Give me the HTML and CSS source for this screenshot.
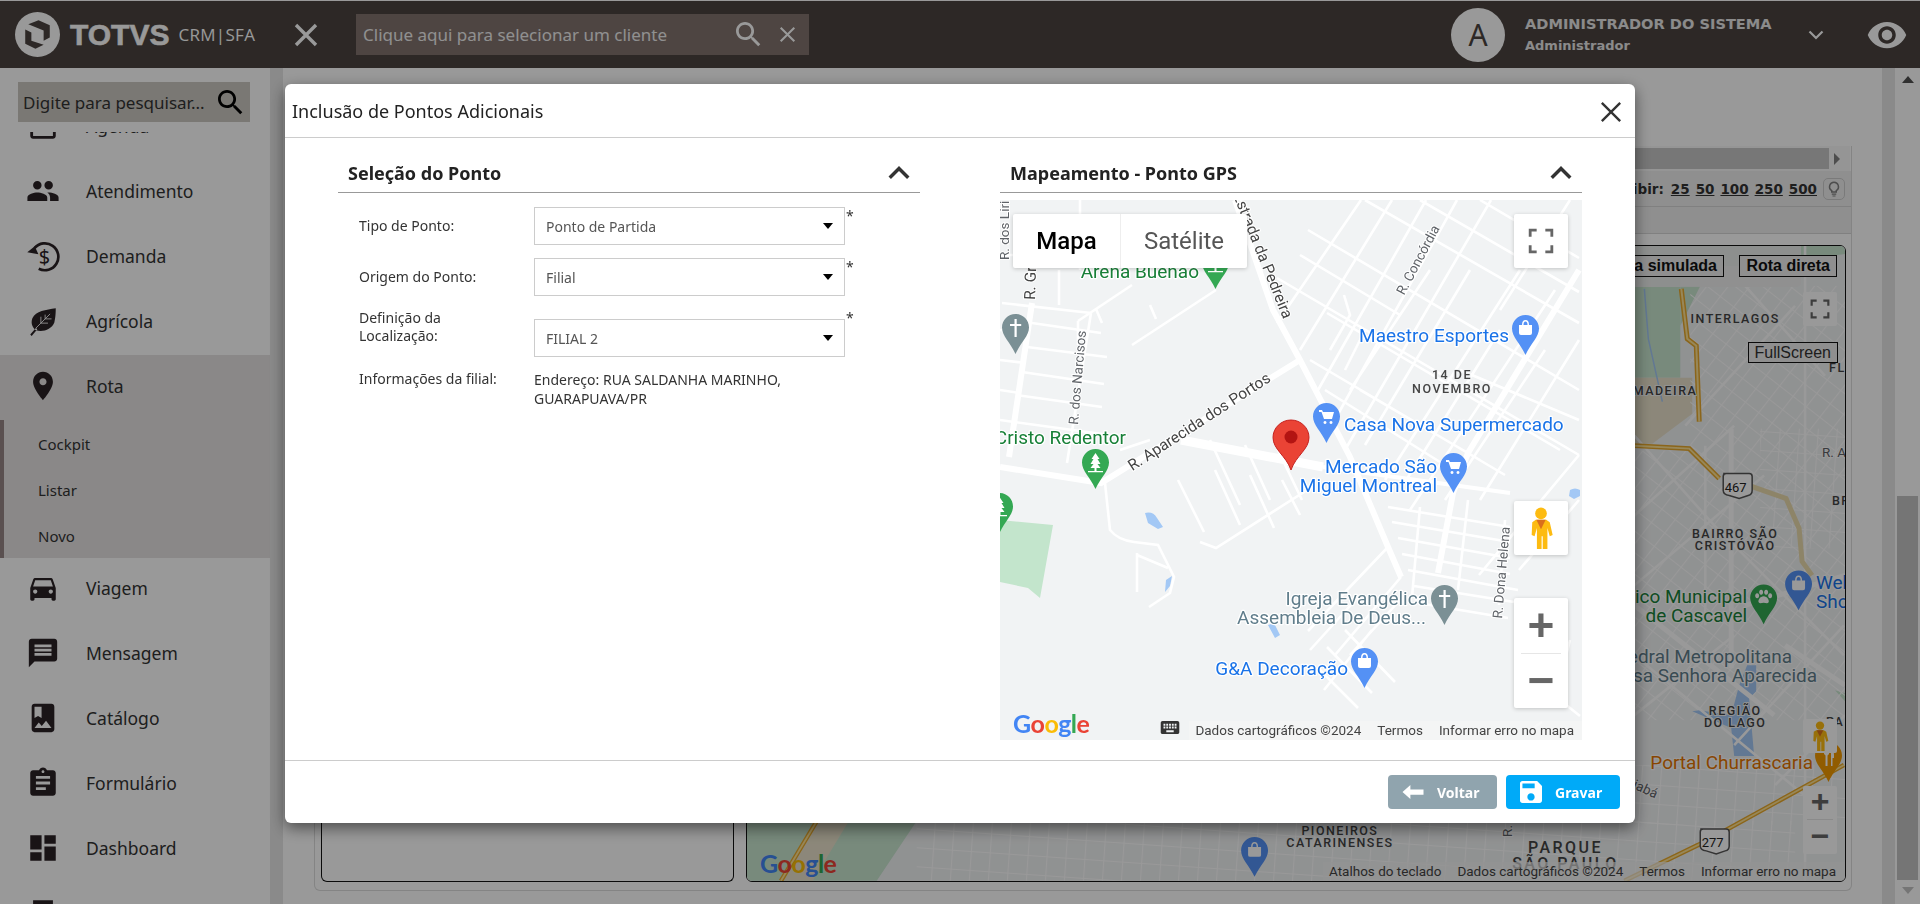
FILE: index.html
```html
<!DOCTYPE html>
<html lang="pt-BR">
<head>
    <meta charset="UTF-8">
    <title>TOTVS CRM | SFA</title>
    <link rel="stylesheet" href="styles.css">
</head>
<body>
    <svg class="defs" width="0" height="0">
        <defs>
            <pattern id="grid-tilt" width="17" height="17" patternUnits="userSpaceOnUse" patternTransform="rotate(38)"><path d="M0 0H17M0 0V17" fill="none" stroke="#fff" stroke-width="2.200"/></pattern>
            <pattern id="grid-flat" width="19" height="19" patternUnits="userSpaceOnUse" patternTransform="rotate(4)"><path d="M0 0H19M0 0V19" fill="none" stroke="#fff" stroke-width="2.200"/></pattern>
            <path id="pin" d="M13.5 0C6 0 0 6 0 13.5 0 22 8 28 13.5 40 19 28 27 22 27 13.5 27 6 21 0 13.5 0z"/>
            <g id="pin-bag"><use href="#pin"/><path fill="#fff" d="M7 10h13v8q0 2-2 2H9q-2 0-2-2zM10 10q0-5 3.500-5t3.500 5h-1.500q0-3.500-2-3.500t-2 3.500z"/></g>
            <g id="pin-cart"><use href="#pin"/><path fill="#fff" d="M6 7h3l1 2h11l-2 7H11L8.500 9H6zM12 18a1.500 1.500 0 1 0 .01 0zM18 18a1.500 1.500 0 1 0 .01 0z"/></g>
            <g id="pin-cross"><use href="#pin"/><path fill="#fff" d="M12.500 5h2.200v5h4.500v2h-4.500v11h-2.200V12H8v-2h4.500z"/></g>
            <g id="pin-tree"><use href="#pin"/><path fill="#fff" d="M13.500 4l4 6h-2l3 5h-3l3 4h-10l3-4h-3l3-5h-2zM12.500 19h2v3h-2zM6 22h15v1.200H6z"/></g>
            <g id="pin-food"><use href="#pin"/><path fill="#fff" d="M9 6h1v5h1V6h1v5h1V6h1v6l-1.500 1.500V24h-2V13.500L9 12zM16 6q3 1 3 7v3h-1.500v8H16z"/></g>
            <g id="pin-paw"><use href="#pin"/><path fill="#fff" d="M13.500 12c3.500 0 6 4 5 6-1 1.500-3 .5-5 .5s-4 1-5-.5c-1-2 1.500-6 5-6zM7 9a2 2.500 0 1 0 .01 0zM11 5.500a2 2.500 0 1 0 .01 0zM16 5.500a2 2.500 0 1 0 .01 0zM20 9a2 2.500 0 1 0 .01 0z"/></g>
            <g id="pegman">
                <circle cx="12" cy="5.500" r="5" fill="#fdbb11"/>
                <path fill="#fdbb11" d="M7.500 11h9l3 2 2.500 11-2.500 1-2-7v18h-4V25h-1v11h-4V18l-2 7-2.500-1L4.500 13z"/>
                <path fill="#d96f1c" d="M8 11h8l-4 8z"/>
            </g>
        </defs>
    </svg>

    <header class="topbar">
        <div class="logo">
            <svg class="logo-mark" viewBox="0 0 44 44">
                <circle cx="22" cy="22" r="22" fill="#fff"/>
                <path fill="#4b4440" d="M13 12l10-4 11 5v12l-6 3V18zM10 17l6 3v8l12 4-8 4-10-5z"/>
            </svg>
            <span class="logo-name">TOTVS</span>
            <span class="logo-sub">CRM|SFA</span>
        </div>
        <svg class="toggle" viewBox="0 0 24 24"><path d="M2 2l20 20M22 2L2 22"/></svg>
        <div class="client-search">
            <span>Clique aqui para selecionar um cliente</span>
            <svg class="client-glass" viewBox="3 3 18 18"><path d="M15.500 14h-.79l-.28-.27C15.410 12.590 16 11.110 16 9.500 16 5.910 13.090 3 9.500 3S3 5.910 3 9.500 5.910 16 9.500 16c1.610 0 3.090-.59 4.230-1.570l.27.28v.79l5 4.990L20.490 19l-4.990-5zm-6 0C7.010 14 5 11.990 5 9.500S7.010 5 9.500 5 14 7.010 14 9.500 11.990 14 9.500 14z"/></svg>
            <svg class="client-x" viewBox="0 0 20 20"><path d="M2 2l16 16M18 2L2 18"/></svg>
        </div>
        <div class="user">
            <div class="avatar">A</div>
            <div class="user-info">
                <div class="user-name">ADMINISTRADOR DO SISTEMA</div>
                <div class="user-role">Administrador</div>
            </div>
            <svg class="user-caret" viewBox="0 0 16 10"><path d="M1.500 1.500L8 8l6.500-6.500"/></svg>
            <svg class="eye" viewBox="1 4 22 16"><path d="M12 4.500C7 4.500 2.730 7.610 1 12c1.730 4.390 6 7.500 11 7.500s9.270-3.110 11-7.500c-1.730-4.390-6-7.500-11-7.500zM12 17c-2.760 0-5-2.240-5-5s2.240-5 5-5 5 2.240 5 5-2.240 5-5 5zm0-8c-1.660 0-3 1.340-3 3s1.340 3 3 3 3-1.340 3-3-1.340-3-3-3z"/></svg>
        </div>
    </header>

    <div class="layout">
        <aside class="sidebar">
            <div class="side-search-wrap">
                <div class="side-search">
                    <span>Digite para pesquisar...</span>
                    <svg viewBox="3 3 18 18"><path d="M15.500 14h-.79l-.28-.27C15.410 12.590 16 11.110 16 9.500 16 5.910 13.090 3 9.500 3S3 5.910 3 9.500 5.910 16 9.500 16c1.610 0 3.090-.59 4.230-1.570l.27.28v.79l5 4.990L20.490 19l-4.990-5zm-6 0C7.010 14 5 11.990 5 9.500S7.010 5 9.500 5 14 7.010 14 9.500 11.990 14 9.500 14z"/></svg>
                </div>
            </div>
            <nav class="menu">
                <div class="menu-list">
                    <div class="menu-item">
                        <svg viewBox="0 0 24 24"><path d="M19 3h-1V1h-2v2H8V1H6v2H5c-1.110 0-1.990.9-1.990 2L3 19c0 1.100.89 2 2 2h14c1.100 0 2-.9 2-2V5c0-1.100-.9-2-2-2zm0 16H5V8h14v11z"/></svg>
                        <span>Agenda</span>
                    </div>
                    <div class="menu-item">
                        <svg viewBox="0 0 24 24"><path d="M16 11c1.660 0 2.990-1.340 2.990-3S17.660 5 16 5c-1.660 0-3 1.340-3 3s1.340 3 3 3zm-8 0c1.660 0 2.990-1.340 2.990-3S9.660 5 8 5C6.340 5 5 6.340 5 8s1.340 3 3 3zm0 2c-2.330 0-7 1.170-7 3.500V19h14v-2.500c0-2.330-4.670-3.500-7-3.500zm8 0c-.29 0-.62.02-.97.05 1.160.84 1.970 1.970 1.970 3.450V19h6v-2.500c0-2.330-4.670-3.500-7-3.500z"/></svg>
                        <span>Atendimento</span>
                    </div>
                    <div class="menu-item">
                        <svg viewBox="0 0 24 24">
                            <path fill="none" stroke="currentColor" stroke-width="1.900" d="M6 6.500A9.500 9.500 0 1 1 9 21"/>
                            <path d="M1 10h8L5.500 5z" transform="rotate(10 5 9)"/>
                            <text class="dollar" x="13" y="17.500">$</text>
                        </svg>
                        <span>Demanda</span>
                    </div>
                    <div class="menu-item">
                        <svg viewBox="0 0 24 24">
                            <path d="M21 3C14 4 7 5 4.500 10 3 14 5 17 7 18.500 12 20 18 18 20 13 21 9 21 5 21 3zM3 21.500l4-4.500 1 .8L4 22.500z"/>
                            <path class="leaf-vein" d="M7 17L17 7M10.500 13.500V9M13.500 10.500V7.500M10.500 13.500h5M13.500 10.500h4.500"/>
                        </svg>
                        <span>Agrícola</span>
                    </div>
                    <div class="menu-item active">
                        <svg viewBox="0 0 24 24"><path d="M12 2C8.130 2 5 5.130 5 9c0 5.250 7 13 7 13s7-7.750 7-13c0-3.870-3.130-7-7-7zm0 9.500c-1.380 0-2.500-1.120-2.500-2.500s1.120-2.500 2.500-2.500 2.500 1.120 2.500 2.500-1.120 2.500-2.500 2.500z"/></svg>
                        <span>Rota</span>
                    </div>
                    <div class="submenu">
                        <div class="sub-item">Cockpit</div>
                        <div class="sub-item">Listar</div>
                        <div class="sub-item">Novo</div>
                    </div>
                    <div class="menu-item">
                        <svg viewBox="0 0 24 24"><path d="M18.920 6.010C18.720 5.420 18.160 5 17.500 5h-11c-.66 0-1.210.42-1.420 1.010L3 12v8c0 .55.45 1 1 1h1c.55 0 1-.45 1-1v-1h12v1c0 .55.45 1 1 1h1c.55 0 1-.45 1-1v-8l-2.080-5.990zM6.500 16c-.83 0-1.500-.67-1.500-1.500S5.670 13 6.500 13s1.500.67 1.500 1.500S7.330 16 6.500 16zm11 0c-.83 0-1.500-.67-1.500-1.500s.67-1.500 1.500-1.500 1.500.67 1.500 1.500-.67 1.500-1.500 1.500zM5 11l1.500-4.500h11L19 11H5z"/></svg>
                        <span>Viagem</span>
                    </div>
                    <div class="menu-item">
                        <svg viewBox="0 0 24 24"><path d="M20 2H4c-1.100 0-1.990.9-1.990 2L2 22l4-4h14c1.100 0 2-.9 2-2V4c0-1.100-.9-2-2-2zm-2 12H6v-2h12v2zm0-3H6V9h12v2zm0-3H6V6h12v2z"/></svg>
                        <span>Mensagem</span>
                    </div>
                    <div class="menu-item">
                        <svg viewBox="0 0 24 24"><path d="M18 2H6c-1.100 0-2 .9-2 2v16c0 1.100.9 2 2 2h12c1.100 0 2-.9 2-2V4c0-1.100-.9-2-2-2zM6 4h5v8l-2.500-1.500L6 12V4zm0 15l3-3.860 2.140 2.580 3-3.860L18 19H6z"/></svg>
                        <span>Catálogo</span>
                    </div>
                    <div class="menu-item">
                        <svg viewBox="0 0 24 24"><path d="M19 3h-4.180C14.400 1.840 13.300 1 12 1c-1.300 0-2.400.84-2.820 2H5c-1.100 0-2 .9-2 2v14c0 1.100.9 2 2 2h14c1.100 0 2-.9 2-2V5c0-1.100-.9-2-2-2zm-7 0c.55 0 1 .45 1 1s-.45 1-1 1-1-.45-1-1 .45-1 1-1zm2 14H7v-2h7v2zm3-4H7v-2h10v2zm0-4H7V7h10v2z"/></svg>
                        <span>Formulário</span>
                    </div>
                    <div class="menu-item">
                        <svg viewBox="0 0 24 24"><path d="M3 13h8V3H3v10zm0 8h8v-6H3v6zm10 0h8V11h-8v10zm0-18v6h8V3h-8z"/></svg>
                        <span>Dashboard</span>
                    </div>
                    <div class="menu-item">
                        <svg viewBox="0 0 24 24"><path d="M19 3H5v18h14z"/></svg>
                        <span>Relatórios</span>
                    </div>
                </div>
            </nav>
        </aside>
        <div class="side-strip"></div>

        <main class="content">
            <section class="panel">
                <div class="panel-top">
                    <div class="panel-top-bar"></div>
                    <div class="panel-top-arrow"></div>
                </div>
                <div class="panel-tools">
                    <span class="show-label">Exibir:</span>
                    <a>25</a><a>50</a><a>100</a><a>250</a><a>500</a>
                    <div class="bulb">
                        <svg viewBox="0 0 24 24"><path d="M12 2a7 7 0 0 0-4 12.700V17h8v-2.300A7 7 0 0 0 12 2zm0 2a5 5 0 0 1 3 9l-1 .7V15h-4v-1.300L9 13a5 5 0 0 1 3-9zM9 18h6v1.500H9zM10 20.500h4V22h-4z"/></svg>
                    </div>
                </div>
                <div class="panel-filter"></div>
                <div class="panel-body">
                    <div class="route-list"></div>
                    <div class="route-map">
                        <svg class="map-svg" viewBox="0 0 1100 636">
                            <rect width="1100" height="636" fill="#f1f3f4"/>
                            <path fill="#c8e6cf" d="M889 0H1100V8L1010 20H889zM0 576H170L130 636H0zM889 20h46v112h-46zM1090 445l10 3v8z"/>
                            <path fill="#c8e6cf" d="M935 40h20l-20 40z"/>
                            <path fill="#e9e2cb" d="M889 132h58v36l-40 30h-18zM36 636l36-60h30l-36 60z"/>
                            <rect x="945" y="40" width="155" height="165" fill="url(#grid-tilt)"/>
                            <rect x="889" y="205" width="211" height="170" fill="url(#grid-tilt)"/>
                            <rect x="1015" y="183" width="85" height="120" fill="url(#grid-flat)"/>
                            <rect x="889" y="375" width="211" height="100" fill="url(#grid-tilt)"/>
                            <rect x="889" y="520" width="211" height="60" fill="url(#grid-flat)"/>
                            <rect x="170" y="576" width="880" height="60" fill="url(#grid-flat)"/>
                            <path fill="none" stroke="#a3c8f5" stroke-width="1.500" d="M899 43l4 50 14 63"/>
                            <path fill="#a3c8f5" d="M1002 420h9v26l-7 7 5 58h-20l-3-28-39-17 7-1 32 5 8-30z"/>
                            <g class="road" fill="none">
                                <path d="M1000 40l80 90M1050 60l-110 120M889 190l80 90 130 130M889 270l100-90M889 340l130-110M1060 0v640M960 200v180M889 410l170 140M889 470l100-80M1099 380l-110 120M1100 470l-70 70"/>
                            </g>
                            <path fill="none" stroke="#fff" stroke-width="5" d="M889 360l140 110M1040 400l60 40M1000 360l100-30M986 183v240"/>
                            <path fill="none" stroke="#ecdcae" stroke-width="5" d="M986 238l18 2 37 13 13 30 3 33 10 14"/>
                            <path fill="none" stroke="#e8a92c" stroke-width="5" d="M936 43l6 50 9 7 3 76M889 200l55 3 30 30"/>
                            <path fill="none" stroke="#fde293" stroke-width="2" d="M936 43l6 50 9 7 3 76M889 200l55 3 30 30"/>
                            <path fill="none" stroke="#e8a92c" stroke-width="4.500" d="M1099 520L979 586l-26 14-74 36M70 576L34 636"/>
                            <path fill="none" stroke="#fde293" stroke-width="1.800" d="M1099 520L979 586l-26 14-74 36M70 576L34 636"/>
                            <g class="shield"><path d="M978 228h26q3 0 3 3v14q0 4-4 5l-9 3-10-3q-6-1-6-5v-14q0-3 3-3z"/><text x="990.500" y="246">467</text></g>
                            <g class="shield"><path d="M955 584h26q3 0 3 3v14q0 4-4 5l-9 3-10-3q-6-1-6-5v-14q0-3 3-3z"/><text x="967.500" y="602">277</text></g>
                            <g class="map-hood">
                                <text x="990" y="77">INTERLAGOS</text>
                                <text class="start" x="1084" y="126">FL</text>
                                <text class="end" x="952" y="149">GSMADEIRA</text>
                                <text x="990" y="293">BAIRRO SÃO</text>
                                <text x="990" y="305">CRISTÓVÃO</text>
                                <text x="990" y="470">REGIÃO</text>
                                <text x="990" y="482">DO LAGO</text>
                                <text class="start" x="1081" y="481">PA</text>
                                <text class="start" x="1087" y="259">BF</text>
                                <text x="594" y="590">PIONEIROS</text>
                                <text x="594" y="602">CATARINENSES</text>
                                <text class="big" x="820" y="608">PARQUE</text>
                                <text class="big" x="820" y="624">SÃO PAULO</text>
                            </g>
                            <text class="map-street" x="1077" y="211" text-anchor="start">R. A</text>
                            <text class="map-street" transform="translate(872 536) rotate(25)">Cuiabá</text>
                            <text class="map-street" transform="translate(766 592) rotate(-90)">R.</text>
                            <text class="map-poi green" text-anchor="end" x="1002" y="358">Zoológico Municipal</text>
                            <text class="map-poi green" text-anchor="end" x="1002" y="377">de Cascavel</text>
                            <text class="map-poi blue" x="1071" y="344">Weber</text>
                            <text class="map-poi blue" x="1071" y="363">Shop</text>
                            <text class="map-poi slate" text-anchor="end" x="1047" y="418">Catedral Metropolitana</text>
                            <text class="map-poi slate" text-anchor="end" x="1072" y="437">Nossa Senhora Aparecida</text>
                            <text class="map-poi orange" text-anchor="end" x="1068" y="524">Portal Churrascaria</text>
                            <use href="#pin-paw" fill="#34a853" transform="translate(1005 339)"/>
                            <use href="#pin-bag" fill="#5491f5" transform="translate(1040 325)"/>
                            <use href="#pin-food" fill="#f29900" transform="translate(1070 497)"/>
                            <use href="#pin-bag" fill="#5491f5" transform="translate(495 592)"/>
                            <text class="map-logo" x="13" y="628"><tspan fill="#4285f4">G</tspan><tspan fill="#ea4335">o</tspan><tspan fill="#fbbc05">o</tspan><tspan fill="#4285f4">g</tspan><tspan fill="#34a853">l</tspan><tspan fill="#ea4335">e</tspan></text>
                        </svg>
                        <div class="route-bar"></div>
                        <div class="route-btn route-sim">Rota simulada</div>
                        <div class="route-btn route-dir">Rota direta</div>
                        <div class="map-ctl back-fs"><svg viewBox="0 0 24 24"><path class="fs-path" d="M2 8V2h6M16 2h6v6M22 16v6h-6M8 22H2v-6"/></svg></div>
                        <div class="fs-label">FullScreen</div>
                        <div class="map-ctl back-peg"><svg viewBox="0 0 24 36"><use href="#pegman"/></svg></div>
                        <div class="map-ctl back-zoom">
                            <div class="zoom-btn">+</div>
                            <div class="zoom-line"></div>
                            <div class="zoom-btn">−</div>
                        </div>
                        <div class="back-attr">
                            <span>Atalhos do teclado</span>
                            <span>Dados cartográficos ©2024</span>
                            <span>Termos</span>
                            <span>Informar erro no mapa</span>
                        </div>
                    </div>
                </div>
            </section>
        </main>
        <div class="page-strip"></div>
        <div class="page-scroll">
            <div class="scroll-up"></div>
            <div class="scroll-track"><div class="scroll-thumb"></div></div>
            <div class="scroll-down"></div>
        </div>
    </div>

    <div class="overlay"></div>

    <div class="modal">
        <div class="modal-head">
            <h1>Inclusão de Pontos Adicionais</h1>
            <svg class="modal-close" viewBox="0 0 24 24"><path d="M2 2l20 20M22 2L2 22"/></svg>
        </div>
        <div class="modal-body">
            <section class="block">
                <div class="block-head">
                    <h2>Seleção do Ponto</h2>
                    <svg viewBox="6 8 12 8"><path d="M12 8l-6 6 1.410 1.410L12 10.830l4.590 4.580L18 14z"/></svg>
                </div>
                <div class="form">
                    <div class="form-row">
                        <label>Tipo de Ponto:</label>
                        <div class="select">Ponto de Partida</div>
                        <span class="req">*</span>
                    </div>
                    <div class="form-row">
                        <label>Origem do Ponto:</label>
                        <div class="select">Filial</div>
                        <span class="req">*</span>
                    </div>
                    <div class="form-row form-row-tall">
                        <label>Definição da<br>Localização:</label>
                        <div class="select">FILIAL 2</div>
                        <span class="req">*</span>
                    </div>
                    <div class="form-row form-row-info">
                        <label>Informações da filial:</label>
                        <div class="info">Endereço: RUA SALDANHA MARINHO,<br>GUARAPUAVA/PR</div>
                    </div>
                </div>
            </section>
            <section class="block">
                <div class="block-head">
                    <h2>Mapeamento - Ponto GPS</h2>
                    <svg viewBox="6 8 12 8"><path d="M12 8l-6 6 1.410 1.410L12 10.830l4.590 4.580L18 14z"/></svg>
                </div>
                <div class="gps-map">
                    <svg class="map-svg" viewBox="0 0 582 540">
                        <rect width="582" height="540" fill="#f1f3f4"/>
                        <path fill="#c3e5cc" d="M0 320l53 5-13 73-12-10-28-6z"/>
                        <path fill="#a3c8f5" d="M145 313q8-2 12 5l6 9-5 2-10-6zM166 380l6-4-2 10-5 6zM268 425l6-2 6 12-5 3zM570 290q5-3 10 0v6l-6 3-5-3z"/>
                        <g class="road" fill="none">
                            <path d="M361 0L277 123M392 0L300 150M426 0L318 190M457 0L332 225M491 0L345 250M520 70L385 280M555 90L410 310M579 140L480 300M430 70L350 190M470 70L365 245M500 130L400 290M545 150L445 300"/>
                            <path d="M308 30L579 190M365 0L579 123M277 78L579 255M327 113L560 250M420 0L579 92M310 160L505 275M360 190L480 260M325 190L440 262M480 0L579 58M300 55L400 115M460 170L579 220"/>
                            <path d="M2 103l89 10M32 123l69 10M27 147l80 10M22 172l82 12M16 195l86 12M14 222l88 12M80 0v70M59 70v35M91 113l-24 150M0 55h60M0 130l30 4M0 160l25 3M0 190l20 3M0 220l14 2"/>
                            <path d="M105 283l5 47q8 10 24 12l24 3 16 32-4 16-21 14M137 353v39M137 355l31 13"/>
                            <path d="M178 280l26 52M215 270l25 55M250 275l24 53M282 280l18 35M200 342l16 6 99-63M210 240l30 65M245 245l25 55M278 250l24 50M150 240l-30 10"/>
                            <path d="M132 85l-12 8-24 16-18 12M96 109l6 14M150 105l6 14M78 121v24M216 90l-84 55"/>
                            <path d="M388 307l122 20M392 322l118 20M398 338l112 20M402 354l108 20M408 370l110 20M414 386l100 16M418 403l90 15M420 307l-8 90M468 300l-10 90M505 320l-6 85"/>
                            <path d="M388 347l-80 84M401 377l-66 78M400 400l-50 55M345 430l50 52M327 447l45 46M320 470l38 38M372 430l-48 60M570 440l-15 60M560 500l20 16M530 530l12-8M360 395l-50 55"/>
                            <path d="M579 255l-100 120M579 300l-60 70M570 0l-70 110"/>
                            <path d="M330 150l20-35-6-20M345 170l20-40"/>
                        </g>
                        <g class="road-md" fill="none">
                            <path d="M235 0l38 110 27 50 50 97 38 90 13 30"/>
                            <path d="M300 160L101 283 0 267"/>
                            <path d="M579 70L468 253l-15 40-15 80"/>
                            <path d="M32 103L9 257"/>
                        </g>
                        <path fill="none" stroke="#fff" stroke-width="9" d="M181 240l142 27"/>
                        <path fill="none" stroke="#fff" stroke-width="4" d="M323 267l187 26"/>

                        <text class="map-street" transform="translate(422 62) rotate(-62)" text-anchor="middle">R. Concórdia</text>
                        <text class="map-street" transform="translate(82 178) rotate(-85)" text-anchor="middle">R. dos Narcisos</text>
                        <text class="map-street" transform="translate(506 373) rotate(-85)" text-anchor="middle">R. Dona Helena</text>
                        <text class="map-street wide" transform="translate(202 226) rotate(-33)" text-anchor="middle">R. Aparecida dos Portos</text>
                        <text class="map-street wide" transform="translate(233 -5) rotate(68)">Estrada da Pedreira</text>
                        <text class="map-street" transform="translate(9 60) rotate(-90)">R. dos Líri</text>
                        <text class="map-street wide" transform="translate(35 100) rotate(-88)">R. Graciosa</text>

                        <g class="map-hood">
                            <text x="452" y="179">14 DE</text>
                            <text x="452" y="193">NOVEMBRO</text>
                        </g>

                        <text class="map-poi green" text-anchor="end" x="199" y="78">Arena Buenão</text>
                        <text class="map-poi green" text-anchor="end" x="126" y="244">Cristo Redentor</text>
                        <text class="map-poi blue" text-anchor="end" x="509" y="142">Maestro Esportes</text>
                        <text class="map-poi blue" x="344" y="231">Casa Nova Supermercado</text>
                        <text class="map-poi blue" text-anchor="end" x="437" y="273">Mercado São</text>
                        <text class="map-poi blue" text-anchor="end" x="437" y="292">Miguel Montreal</text>
                        <text class="map-poi slate" text-anchor="end" x="428" y="405">Igreja Evangélica</text>
                        <text class="map-poi slate" text-anchor="end" x="426" y="424">Assembleia De Deus...</text>
                        <text class="map-poi blue" text-anchor="end" x="348" y="475">G&amp;A Decoração</text>

                        <use href="#pin-tree" fill="#34a853" transform="translate(202 49)"/>
                        <use href="#pin-cross" fill="#7b9095" transform="translate(2 114)"/>
                        <use href="#pin-bag" fill="#5491f5" transform="translate(512 115)"/>
                        <use href="#pin-cart" fill="#5491f5" transform="translate(313 203)"/>
                        <use href="#pin-cart" fill="#5491f5" transform="translate(440 253)"/>
                        <use href="#pin-tree" fill="#34a853" transform="translate(82 249)"/>
                        <use href="#pin-tree" fill="#34a853" transform="translate(-14 293)"/>
                        <use href="#pin-cross" fill="#7b9095" transform="translate(431 385)"/>
                        <use href="#pin-bag" fill="#5491f5" transform="translate(351 448)"/>

                        <path fill="#ea4335" stroke="#c5221f" d="M291 220c-10 0-18 8-18 17.500 0 12 13 18 18 32.500 5-14.500 18-20.500 18-32.500 0-9.500-8-17.500-18-17.500z"/>
                        <circle cx="291" cy="237" r="6.500" fill="#b31412"/>

                        <text class="map-logo" x="13" y="533"><tspan fill="#4285f4">G</tspan><tspan fill="#ea4335">o</tspan><tspan fill="#fbbc05">o</tspan><tspan fill="#4285f4">g</tspan><tspan fill="#34a853">l</tspan><tspan fill="#ea4335">e</tspan></text>
                    </svg>
                    <div class="map-type">
                        <div class="map-type-btn on">Mapa</div>
                        <div class="map-type-btn">Satélite</div>
                    </div>
                    <div class="gps-ctl gps-fs"><svg viewBox="0 0 24 24"><path class="fs-path" d="M2 8V2h6M16 2h6v6M22 16v6h-6M8 22H2v-6"/></svg></div>
                    <div class="gps-ctl gps-peg"><svg viewBox="0 0 24 36"><use href="#pegman"/></svg></div>
                    <div class="gps-ctl gps-zoom">
                        <div class="zoom-btn">+</div>
                        <div class="zoom-line"></div>
                        <div class="zoom-btn">−</div>
                    </div>
                    <div class="gps-keys">
                        <svg viewBox="2 5 20 14"><path d="M20 5H4c-1.100 0-1.990.9-1.990 2L2 17c0 1.100.9 2 2 2h16c1.100 0 2-.9 2-2V7c0-1.100-.9-2-2-2zm-9 3h2v2h-2V8zm0 3h2v2h-2v-2zM8 8h2v2H8V8zm0 3h2v2H8v-2zm-1 2H5v-2h2v2zm0-3H5V8h2v2zm9 7H8v-2h8v2zm0-4h-2v-2h2v2zm0-3h-2V8h2v2zm3 3h-2v-2h2v2zm0-3h-2V8h2v2z"/></svg>
                    </div>
                    <div class="gps-attr">
                        <span>Dados cartográficos ©2024</span>
                        <span>Termos</span>
                        <span>Informar erro no mapa</span>
                    </div>
                </div>
            </section>
        </div>
        <div class="modal-foot">
            <button class="btn btn-back">
                <svg viewBox="0 0 24 16"><path d="M0 8l9-8v5h15v6H9v5z"/></svg>
                Voltar
            </button>
            <button class="btn btn-save">
                <svg viewBox="3 3 18 18"><path d="M17 3H5c-1.110 0-2 .9-2 2v14c0 1.100.89 2 2 2h14c1.100 0 2-.9 2-2V7l-4-4zm-5 16c-1.660 0-3-1.340-3-3s1.340-3 3-3 3 1.340 3 3-1.340 3-3 3zm3-10H5V5h10v4z"/></svg>
                Gravar
            </button>
        </div>
    </div>
</body>
</html>
```

FILE: styles.css
```css
* {
    box-sizing: border-box;
}
html, body {
    height: 100%;
    margin: 0;
    overflow: hidden;
}
body {
    font-family: 'Noto Sans', sans-serif;
    background: #fff;
    color: #333;
}
.defs {
    position: absolute;
}

/* Barra superior */
.topbar {
    height: 68px;
    border-top: 1px solid #fff;
    background: #4b4440;
    display: flex;
    align-items: center;
    color: #fff;
}
.logo {
    display: flex;
    align-items: center;
    width: 294px;
    padding-left: 15px;
}
.logo-mark {
    width: 45px;
    height: 45px;
}
.logo-name {
    font-family: 'Liberation Sans', sans-serif;
    font-weight: bold;
    font-size: 30px;
    margin-left: 10px;
    -webkit-text-stroke: 0.6px #fff;
}
.logo-sub {
    font-family: 'Open Sans', sans-serif;
    font-size: 17px;
    margin-left: 9px;
    letter-spacing: 0.3px;
}
.toggle {
    width: 24px;
    height: 24px;
    fill: none;
    stroke: #fff;
    stroke-width: 3.4;
    margin-right: 38px;
}
.client-search {
    width: 453px;
    height: 41px;
    margin-top: -1px;
    background: #82736f;
    display: flex;
    align-items: center;
    padding-left: 7px;
    font-size: 17px;
    color: #f0f0f0;
}
.client-search span {
    flex: 1;
}
.client-glass {
    width: 25px;
    height: 25px;
    fill: #fff;
}
.client-x {
    width: 19px;
    height: 17px;
    margin: 0 12px 0 17px;
    fill: none;
    stroke: #fff;
    stroke-width: 2.4;
}
.user {
    margin-left: auto;
    display: flex;
    align-items: center;
}
.avatar {
    width: 54px;
    height: 54px;
    border-radius: 50%;
    background: #fff;
    color: #4b4440;
    font-size: 30px;
    display: flex;
    align-items: center;
    justify-content: center;
}
.user-info {
    width: 283px;
    margin-left: 20px;
    font-family: 'DejaVu Sans', sans-serif;
    font-weight: bold;
    color: #e8e8e8;
}
.user-name {
    font-size: 14.600px;
    line-height: 20px;
    white-space: nowrap;
}
.user-role {
    font-size: 13px;
    line-height: 20px;
    margin-top: 2px;
}
.user-caret {
    width: 16px;
    height: 10px;
    fill: none;
    stroke: #fff;
    stroke-width: 2.2;
}
.eye {
    width: 40px;
    height: 28px;
    fill: #fff;
    margin: 0 13px 0 43px;
}

/* Layout */
.layout {
    height: 836px;
    display: flex;
}
.sidebar {
    width: 270px;
    background: #fff;
    display: flex;
    flex-direction: column;
}
.side-search-wrap {
    padding: 14px 20px 10px 18px;
}
.side-search {
    height: 40px;
    background: #cbc8c1;
    display: flex;
    align-items: center;
    padding: 0 7px 0 5px;
    font-size: 17px;
    justify-content: space-between;
    white-space: nowrap;
    overflow: hidden;
}
.side-search svg {
    width: 25px;
    height: 25px;
    flex: none;
}
.menu {
    flex: 1;
    overflow: hidden;
}
.menu-list {
    margin-top: -37px;
}
.menu-item {
    height: 65px;
    display: flex;
    align-items: center;
    padding: 0 0 4px 26px;
    font-size: 17.500px;
}
.menu-item svg {
    width: 34px;
    height: 34px;
    flex: none;
    margin-right: 26px;
    fill: #2b2226;
    color: #2b2226;
}
.menu-item.active {
    background: #e6e3e3;
}
.dollar {
    font-size: 14px;
    text-anchor: middle;
    font-family: 'Noto Sans', sans-serif;
}
.leaf-vein {
    fill: none;
    stroke: #fff;
    stroke-width: 0.6;
}
.submenu {
    background: #e6e3e3;
    border-left: 4px solid #968585;
    height: 137.500px;
}
.sub-item {
    height: 45.800px;
    padding: 3px 0 0 34px;
    font-size: 15px;
    display: flex;
    align-items: center;
}
.side-strip {
    width: 13px;
    background: #e6e6e6;
}
.content {
    width: 1599px;
    padding: 78px 0 0 31px;
}
.page-strip {
    width: 13px;
    background: #e6e6e6;
}
.page-scroll {
    width: 25px;
    display: flex;
    flex-direction: column;
    padding: 0 2px;
}
.scroll-up, .scroll-down {
    width: 0;
    height: 0;
    margin: 8px auto 0;
    border: 6px solid transparent;
    border-top: 0;
    border-bottom: 7px solid #505050;
}
.scroll-down {
    margin: 6px auto 10px;
    border-bottom: 0;
    border-top: 7px solid #c4c4c4;
}
.scroll-track {
    flex: 1;
    padding-top: 413px;
}
.scroll-thumb {
    height: 384px;
    background: #c4c4c4;
}

/* Painel do fundo */
.panel {
    width: 1538px;
    height: 745px;
    border: 1px solid #dcdcdc;
    border-top: 0;
    border-radius: 0 0 6px 6px;
    display: flex;
    flex-direction: column;
}
.panel-top {
    height: 25px;
    padding: 2px 1px;
    display: flex;
    background: #f8f8f8;
    margin-right: 1px;
}
.panel-top-bar {
    flex: 1;
    background: #c6c6c6;
    margin-right: 25px;
}
.panel-top-arrow {
    width: 0;
    height: 0;
    margin: 5px 9px 0 -20px;
    border: 6px solid transparent;
    border-left: 6px solid #808080;
    border-right: 0;
    border-top-width: 6px;
}
.panel-tools {
    height: 37px;
    background: #efefef;
    border-bottom: 1px solid #d6d6d6;
    display: flex;
    align-items: center;
    justify-content: flex-end;
    font-family: 'DejaVu Sans', sans-serif;
    font-weight: bold;
    font-size: 13.500px;
    color: #333;
    padding-right: 6px;
}
.panel-tools a {
    text-decoration: underline;
    margin-left: 6px;
}
.panel-tools a:first-of-type {
    margin-left: 7px;
}
.bulb {
    width: 22px;
    height: 22px;
    margin-left: 6px;
    border: 1px solid #ccc;
    border-radius: 5px;
    display: flex;
    align-items: center;
    justify-content: center;
}
.bulb svg {
    width: 18px;
    height: 18px;
    fill: #808080;
}
.panel-filter {
    height: 27px;
    background: #efefef;
    border-bottom: 1px solid #d6d6d6;
}
.panel-body {
    flex: 1;
    display: flex;
    gap: 12px;
    padding: 11px 5px 8px 6px;
}
.route-list {
    width: 413px;
    border: 1px solid #111;
    border-top: 0;
    border-radius: 0 0 6px 6px;
}
.route-map {
    flex: 1;
    position: relative;
    border: 1px solid #111;
    border-radius: 6px;
    overflow: hidden;
    font-family: 'Liberation Sans', sans-serif;
}
.map-svg {
    display: block;
    width: 100%;
    height: 100%;
}
.route-bar {
    position: absolute;
    top: 0;
    left: 700px;
    width: 354px;
    height: 41px;
    background: rgba(240, 240, 240, 0.9);
    border-radius: 0 0 5px 0;
}
.route-btn {
    position: absolute;
    top: 9px;
    height: 22px;
    border: 1px solid #111;
    background: #eee;
    font-weight: bold;
    font-size: 16px;
    line-height: 19px;
    padding: 0 6px;
    color: #111;
}
.route-sim {
    right: 121px;
}
.route-dir {
    right: 8px;
}
.fs-label {
    position: absolute;
    top: 96px;
    right: 7px;
    height: 21px;
    border: 1px solid #111;
    background: #eee;
    font-size: 16px;
    line-height: 19px;
    padding: 0 6px;
    color: #333;
}
.map-ctl {
    position: absolute;
    right: 8px;
    width: 34px;
    background: #fff;
    border-radius: 2px;
    display: flex;
    flex-direction: column;
    align-items: center;
    justify-content: center;
}
.back-fs {
    top: 46px;
    height: 34px;
}
.back-fs svg {
    width: 20px;
    height: 20px;
}
.fs-path {
    fill: none;
    stroke: #666;
    stroke-width: 2.600;
}
.back-peg {
    top: 473px;
    height: 34px;
}
.back-peg svg {
    width: 20px;
    height: 30px;
}
.back-zoom {
    top: 540px;
    height: 68px;
    justify-content: flex-start;
}
.zoom-btn {
    height: 33px;
    font-family: 'Liberation Sans', sans-serif;
    font-weight: bold;
    font-size: 32px;
    line-height: 31px;
    color: #666;
}
.back-zoom .zoom-btn:last-child {
    margin-top: 1px;
}
.zoom-line {
    width: 26px;
    height: 1px;
    background: #e6e6e6;
    flex: none;
}
.back-attr {
    position: absolute;
    right: 0;
    bottom: 0;
    display: flex;
    gap: 16px;
    padding: 0 9px 0 6px;
    height: 19px;
    background: rgba(245, 245, 245, 0.7);
    font-family: 'Roboto', sans-serif;
    font-size: 13.500px;
    line-height: 19px;
    color: #444;
}

/* Textos do mapa */
.road path {
    stroke: #fff;
    stroke-width: 2.600;
}
.road-md path {
    stroke: #fff;
    stroke-width: 6;
}
.map-poi {
    font-family: 'Roboto', sans-serif;
    font-size: 19px;
    paint-order: stroke;
    stroke: #fff;
    stroke-width: 2.500px;
    stroke-linejoin: round;
}
.map-poi.green {
    fill: #188038;
}
.map-poi.blue {
    fill: #1a73e8;
}
.map-poi.slate {
    fill: #607d8b;
}
.map-poi.orange {
    fill: #e37400;
}
.map-street {
    font-family: 'Roboto', sans-serif;
    font-size: 13.500px;
    fill: #5f6368;
    paint-order: stroke;
    stroke: #fff;
    stroke-width: 2px;
}
.map-street.wide {
    font-size: 15.500px;
    fill: #444;
}
.map-hood text {
    font-family: 'Roboto', sans-serif;
    font-weight: 500;
    font-size: 12.500px;
    letter-spacing: 1.500px;
    fill: #444;
    text-anchor: middle;
    paint-order: stroke;
    stroke: #f1f3f4;
    stroke-width: 2px;
}
.map-hood .start {
    text-anchor: start;
}
.map-hood .end {
    text-anchor: end;
}
.map-hood .big {
    font-size: 16px;
    letter-spacing: 2.500px;
}
.shield path {
    fill: #fff;
    stroke: #555;
    stroke-width: 1.500;
}
.shield text {
    font-family: 'Roboto', sans-serif;
    font-size: 13px;
    text-anchor: middle;
    fill: #222;
}
.map-logo {
    font-family: 'Lato', sans-serif;
    font-size: 25px;
    font-weight: 700;
    letter-spacing: -0.5px;
}

/* Fundo escurecido */
.overlay {
    position: fixed;
    inset: 0;
    background: rgba(0, 0, 0, 0.4);
}

/* Modal */
.modal {
    position: fixed;
    left: 285px;
    top: 84px;
    width: 1350px;
    height: 739px;
    background: #fff;
    border-radius: 6px;
    box-shadow: 0 5px 15px rgba(0, 0, 0, 0.5);
    display: flex;
    flex-direction: column;
}
.modal-head {
    height: 54px;
    border-bottom: 1px solid #ccc;
    display: flex;
    align-items: center;
    justify-content: space-between;
    padding: 0 13px 0 7px;
}
.modal-head h1 {
    margin: 0;
    font-size: 18px;
    font-weight: normal;
    color: #222;
}
.modal-close {
    width: 22px;
    height: 22px;
    fill: none;
    stroke: #333;
    stroke-width: 2.600;
    margin-top: 2px;
}
.modal-body {
    flex: 1;
    display: flex;
    gap: 80px;
    padding: 16px 0 0 53px;
}
.block {
    width: 582px;
}
.block-head {
    height: 39px;
    border-bottom: 1px solid #999;
    display: flex;
    align-items: center;
    justify-content: space-between;
    padding: 0 10px 0 10px;
}
.block-head h2 {
    margin: 0;
    font-size: 18px;
    font-weight: bold;
    color: #222;
}
.block-head svg {
    width: 22px;
    height: 14px;
    fill: #333;
}
.form {
    padding: 14px 0 0 21px;
}
.form-row {
    display: flex;
    align-items: center;
    margin-bottom: 13px;
    position: relative;
    font-size: 14px;
    color: #333;
}
.form-row label {
    width: 175px;
    line-height: 18px;
    flex: none;
}
.form-row-tall {
    align-items: flex-start;
}
.form-row-tall .select {
    margin-top: 10px;
}
.form-row-info {
    align-items: flex-start;
    line-height: 19px;
}
.select {
    width: 311px;
    height: 38px;
    border: 1px solid #ccc;
    padding: 1px 0 0 11px;
    display: flex;
    align-items: center;
    position: relative;
    color: #555;
}
.select::after {
    content: "";
    position: absolute;
    right: 11px;
    top: 15px;
    border: 5px solid transparent;
    border-top: 6px solid #000;
    border-bottom: 0;
}
.req {
    position: absolute;
    left: 487px;
    top: 2px;
    font-size: 14px;
    line-height: 14px;
    color: #333;
}
.gps-map {
    position: relative;
    height: 540px;
    margin-top: 7px;
    overflow: hidden;
}
.map-type {
    position: absolute;
    left: 13px;
    top: 14px;
    height: 54px;
    display: flex;
    background: #fff;
    border-radius: 2px;
    box-shadow: 0 1px 4px rgba(0, 0, 0, 0.2);
    font-family: 'Roboto', sans-serif;
    font-size: 24px;
    color: #565656;
}
.map-type-btn {
    width: 127px;
    display: flex;
    align-items: center;
    justify-content: center;
    border-left: 1px solid #eee;
}
.map-type-btn.on {
    width: 107px;
    border: 0;
    color: #000;
    font-weight: 500;
}
.gps-ctl {
    position: absolute;
    left: 514px;
    width: 54px;
    background: #fff;
    border-radius: 2px;
    box-shadow: 0 1px 4px rgba(0, 0, 0, 0.2);
    display: flex;
    flex-direction: column;
    align-items: center;
    justify-content: center;
}
.gps-fs {
    top: 14px;
    height: 54px;
}
.gps-fs svg {
    width: 26px;
    height: 26px;
}
.gps-peg {
    top: 301px;
    height: 54px;
}
.gps-peg svg {
    width: 28px;
    height: 42px;
}
.gps-zoom {
    top: 398px;
    height: 110px;
}
.gps-zoom .zoom-btn {
    height: 54px;
    font-size: 46px;
    line-height: 52px;
}
.gps-zoom .zoom-line {
    width: 40px;
}
.gps-keys {
    position: absolute;
    left: 160px;
    bottom: 6px;
    line-height: 0;
}
.gps-keys svg {
    width: 20px;
    height: 13px;
    fill: #333;
}
.gps-attr {
    position: absolute;
    right: 0;
    bottom: 0;
    height: 19px;
    display: flex;
    gap: 16px;
    padding: 0 8px 0 6px;
    background: rgba(245, 245, 245, 0.7);
    font-family: 'Roboto', sans-serif;
    font-size: 13.500px;
    line-height: 19px;
    color: #444;
}
.modal-foot {
    height: 63px;
    border-top: 1px solid #ccc;
    display: flex;
    justify-content: flex-end;
    gap: 9px;
    padding: 14px 15px 0 0;
}
.btn {
    height: 34px;
    border: 0;
    border-radius: 4px;
    display: flex;
    align-items: center;
    color: #fff;
    font-family: 'Noto Sans', sans-serif;
    font-weight: bold;
    font-size: 14px;
}
.btn svg {
    fill: #fff;
    flex: none;
}
.btn-back {
    width: 109px;
    background: #90a4ae;
    padding-left: 14px;
    gap: 13px;
}
.btn-back svg {
    width: 22px;
    height: 14px;
}
.btn-save {
    width: 114px;
    background: #00aaf8;
    padding-left: 14px;
    gap: 13px;
}
.btn-save svg {
    width: 22px;
    height: 22px;
}
```
